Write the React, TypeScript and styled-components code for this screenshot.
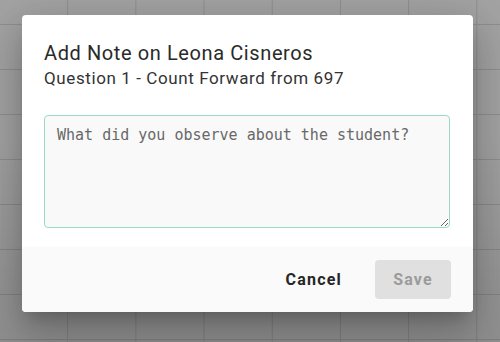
import styled, { createGlobalStyle } from "styled-components"

const GlobalStyle = createGlobalStyle`
  html, body {
    margin: 0;
    padding: 0;
  }
  body {
    font-family: Roboto, "Liberation Sans", sans-serif;
  }
`

// backdrop: dimmed spreadsheet-like grid behind the modal
const Backdrop = styled.div`
  width: 500px;
  height: 342px;
  box-sizing: border-box;
  padding: 15px 0 0 22px;
  background-color: #a3a3a3;
  background-image:
    linear-gradient(to bottom, rgba(0, 0, 0, 0) 40%, rgba(0, 0, 0, 0.12) 100%),
    linear-gradient(to right, #8f8f8f 1px, transparent 1px),
    linear-gradient(to bottom, #8f8f8f 1px, transparent 1px);
  background-size: 100% 100%, 68.2px 100%, 100% 45px;
  background-position: 0 0, -1px 0, 0 24px;
  overflow: hidden;
`

const Dialog = styled.div`
  width: 451px;
  height: 297px;
  background: #fff;
  border-radius: 4px;
  overflow: hidden;
  display: flex;
  flex-direction: column;
  box-shadow: 0 11px 15px -7px rgba(0, 0, 0, 0.2), 0 24px 38px 3px rgba(0, 0, 0, 0.14),
    0 9px 46px 8px rgba(0, 0, 0, 0.12);
`

const Body = styled.div`
  padding: 25px 22px 19px 22px;
  display: flex;
  flex-direction: column;
`

const Title = styled.h2`
  margin: 0;
  font-size: 20px;
  font-weight: 400;
  letter-spacing: 0.6px;
  line-height: 26px;
  color: #2a2a2a;
`

const Subtitle = styled.h3`
  margin: 0;
  font-size: 17px;
  font-weight: 400;
  letter-spacing: 0.6px;
  line-height: 24px;
  color: #333;
`

const NoteInput = styled.textarea`
  margin-top: 25px;
  width: 406px;
  height: 113px;
  box-sizing: border-box;
  padding: 9px 12px;
  border: 1px solid #9cdac4;
  border-radius: 4px;
  background: #f9f9f9;
  font-family: "DejaVu Sans Mono", monospace;
  font-size: 15px;
  line-height: 20px;
  color: #333;
  outline: none;
  resize: vertical;
  caret-color: #222;

  &::placeholder {
    color: #686868;
  }
`

const Footer = styled.div`
  flex: 1;
  background: #fafafa;
  display: flex;
  align-items: center;
  justify-content: flex-end;
  gap: 17px;
  padding: 0 22px;
`

const Button = styled.button<{ $primary?: boolean }>`
  height: 39px;
  padding: 0 16px;
  min-width: 76px;
  border: none;
  border-radius: 4px;
  font-family: Roboto, "Liberation Sans", sans-serif;
  font-size: 16px;
  font-weight: 700;
  letter-spacing: 1.2px;
  background: ${p => (p.$primary ? "#e0e0e0" : "transparent")};
  color: ${p => (p.$primary ? "#9b9b9b" : "#262626")};
  cursor: ${p => (p.$primary ? "default" : "pointer")};
`

export default function App() {
  return (
    <>
      <GlobalStyle />
      <Backdrop>
        <Dialog>
          <Body>
            <Title>Add Note on Leona Cisneros</Title>
            <Subtitle>Question 1 - Count Forward from 697</Subtitle>
            <NoteInput autoFocus placeholder="What did you observe about the student?" />
          </Body>
          <Footer>
            <Button>Cancel</Button>
            <Button $primary disabled>
              Save
            </Button>
          </Footer>
        </Dialog>
      </Backdrop>
    </>
  )
}
